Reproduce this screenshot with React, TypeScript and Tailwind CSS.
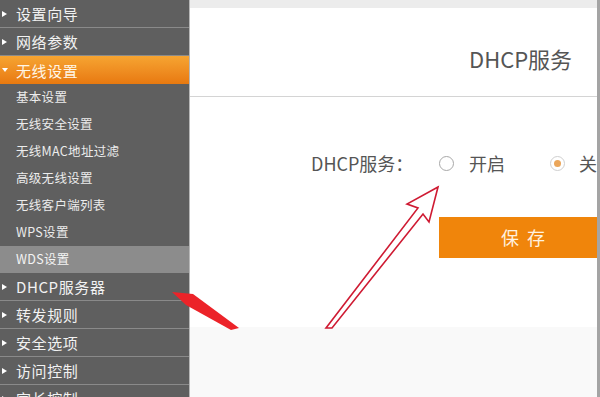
import React from "react";

const font = { fontFamily: '"Noto Sans CJK SC", "Noto Sans", sans-serif' };

function MainRow({ label, open = false }: { label: string; open?: boolean }) {
  return (
    <div
      className={
        open
          ? "h-[28px] shrink-0 flex items-center bg-gradient-to-b from-[#f6a431] to-[#e8790f] text-[#fff6e6]"
          : "h-[28px] shrink-0 flex items-center border-b border-[#8a8a8a] text-[#f2f2f2]"
      }
    >
      <span className="w-[16px] flex justify-center">
        {open ? (
          <span className="block w-0 h-0 border-l-[3px] border-r-[3px] border-t-[4px] border-l-transparent border-r-transparent border-t-white mr-[6px]" />
        ) : (
          <span className="block w-0 h-0 border-t-[3.5px] border-b-[3.5px] border-l-[5px] border-t-transparent border-b-transparent border-l-white mr-[7px]" />
        )}
      </span>
      <span className="text-[15px] leading-none tracking-[0.6px]">{label}</span>
    </div>
  );
}

function SubRow({ label, active = false }: { label: string; active?: boolean }) {
  return (
    <div
      className={
        active
          ? "h-[27px] shrink-0 flex items-center pl-[16px] bg-[#8c8c8c] text-[#f4f4f4] text-[12.5px] tracking-[0.3px]"
          : "h-[27px] shrink-0 flex items-center pl-[16px] text-[#ececec] text-[12.5px] tracking-[0.3px]"
      }
    >
      {label}
    </div>
  );
}

export default function App() {
  return (
    <div className="relative w-[600px] h-[397px] flex overflow-hidden bg-white" style={font}>
      {/* Sidebar */}
      <div className="w-[190px] shrink-0 bg-[#5f5f5f] border-r border-[#b8b8b8] flex flex-col overflow-hidden">
        <MainRow label="设置向导" />
        <MainRow label="网络参数" />
        <MainRow label="无线设置" open />
        <SubRow label="基本设置" />
        <SubRow label="无线安全设置" />
        <SubRow label="无线MAC地址过滤" />
        <SubRow label="高级无线设置" />
        <SubRow label="无线客户端列表" />
        <SubRow label="WPS设置" />
        <SubRow label="WDS设置" active />
        <MainRow label="DHCP服务器" />
        <MainRow label="转发规则" />
        <MainRow label="安全选项" />
        <MainRow label="访问控制" />
        <MainRow label="家长控制" />
      </div>

      {/* Content */}
      <div className="flex-1 flex flex-col border-r-[3px] border-[#a4a4a4] min-w-0 overflow-hidden">
        <div className="h-[8px] bg-[#ececec] shrink-0" />
        <div className="h-[89px] shrink-0 flex items-center pt-[12px] pl-[279px] border-b border-[#d4d4d4] bg-white">
          <span className="text-[22px] text-[#555555] whitespace-nowrap">DHCP服务</span>
        </div>
        <div className="h-[230px] shrink-0 bg-white flex flex-col">
          <div className="mt-[54px] h-[24px] flex items-center pl-[121px] whitespace-nowrap text-[18px] text-[#555555]">
            <span className="w-[128px] shrink-0">DHCP服务：</span>
            <span className="w-[15px] h-[15px] rounded-full border border-[#a8a8a8] bg-white shrink-0" />
            <span className="ml-[15px] w-[81px] shrink-0">开启</span>
            <span className="w-[15px] h-[15px] rounded-full border border-[#cfcfcf] bg-white shrink-0 flex items-center justify-center">
              <span className="w-[7px] h-[7px] rounded-full bg-[#eba65a]" />
            </span>
            <span className="ml-[14px] shrink-0">关闭</span>
          </div>
          <div className="mt-[42px] ml-[249px] w-[170px] h-[41px] shrink-0 bg-[#f0850b] flex items-center pl-[62px] text-[18px] text-[#fff2e0] tracking-[8px] whitespace-nowrap">
            保存
          </div>
        </div>
        <div className="flex-1 bg-[#f9f9f9]" />
      </div>

      {/* Annotation arrows */}
      <svg className="absolute inset-0 pointer-events-none" width="600" height="397" viewBox="0 0 600 397">
        <polygon points="172,292 193,294 239,328 231,330 186,305" fill="#ec2329" />
        <path
          d="M438,187 L407,204 L418,208 L326,328 L332,328 L423,214 L429,222 Z"
          fill="#ffffff"
          stroke="#cf1b33"
          strokeWidth="1.6"
          strokeLinejoin="miter"
        />
      </svg>
    </div>
  );
}
